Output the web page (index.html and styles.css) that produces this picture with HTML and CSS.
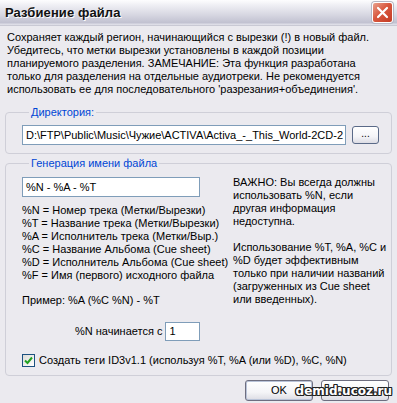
FILE: index.html
```html
<!DOCTYPE html>
<html lang="ru">
<head>
<meta charset="utf-8">
<title>Разбиение файла</title>
<link rel="stylesheet" href="styles.css">
</head>
<body>
<div class="window">
  <div class="titlebar">
    <span class="title">Разбиение файла</span>
    <span class="close">
      <svg width="13" height="13" viewBox="0 0 13 13"><path d="M2 2 L11 11 M11 2 L2 11" stroke="#fff" stroke-width="2.2" stroke-linecap="round"/></svg>
    </span>
  </div>
  <div class="content">
    <p class="desc">Сохраняет каждый регион, начинающийся с вырезки (!) в новый файл.<br>Убедитесь, что метки вырезки установлены в каждой позиции<br>планируемого разделения. ЗАМЕЧАНИЕ: Эта функция разработана<br>только для разделения на отдельные аудиотреки. Не рекомендуется<br>использовать ее для последовательного 'разрезания+объединения'.</p>

    <fieldset class="group dir">
      <legend>Директория:</legend>
      <div class="dir-row">
        <div class="field path">D:\FTP\Public\Music\Чужие\ACTIVA\Activa_-_This_World-2CD-2</div>
        <div class="btn small">...</div>
      </div>
    </fieldset>

    <fieldset class="group gen">
      <legend>Генерация имени файла</legend>
      <div class="gen-cols">
        <div class="left">
          <div class="field pattern">%N - %A - %T</div>
          <p class="codes">%N = Номер трека (Метки/Вырезки)<br>%T = Название трека (Метки/Вырезки)<br>%A = Исполнитель трека (Метки/Выр.)<br>%C = Название Альбома (Cue sheet)<br>%D = Исполнитель Альбома (Cue sheet)<br>%F = Имя (первого) исходного файла</p>
          <p class="example">Пример: %A (%C %N) - %T</p>
          <div class="start-row">
            <span>%N начинается с</span>
            <div class="field num">1</div>
          </div>
        </div>
        <div class="right">
          <p>ВАЖНО: Вы всегда должны<br>использовать %N, если<br>другая информация<br>недоступна.</p>
          <p>Использование %T, %A, %C и<br>%D будет эффективным<br>только при наличии названий<br>(загруженных из Cue sheet<br>или введенных).</p>
        </div>
      </div>
      <label class="check-row">
        <span class="checkbox">
          <svg width="9" height="9" viewBox="0 0 9 9"><path d="M1 4.5 L3.5 7 L8 1.5" fill="none" stroke="#21a121" stroke-width="2"/></svg>
        </span>
        <span>Создать теги ID3v1.1 (используя %T, %A (или %D), %C, %N)</span>
      </label>
    </fieldset>

    <div class="buttons">
      <div class="btn main default">OK</div>
      <div class="btn main">Отмена</div>
    </div>
  </div>
  <div class="watermark">demid.ucoz.ru</div>
</div>
</body>
</html>
```
FILE: styles.css
```css
* { box-sizing: border-box; }
html, body { margin: 0; padding: 0; }
body {
  width: 397px;
  height: 403px;
  overflow: hidden;
  background: #ebeaef;
  font-family: "Liberation Sans", Arial, sans-serif;
  font-size: 11px;
  line-height: 13px;
  color: #000;
}
p { white-space: nowrap; }
.window {
  position: relative;
  width: 397px;
  height: 403px;
}
.titlebar {
  height: 26px;
  display: flex;
  align-items: center;
  justify-content: space-between;
  padding: 0 4px 0 5px;
  background: linear-gradient(#fdfdfe 0%, #ececf2 25%, #d6d6e1 60%, #c2c2d1 90%, #e4e4ec 100%);
  border-bottom: 1px solid #c9c9d4;
}
.title {
  font-weight: bold;
  font-size: 13px;
  color: #111;
  text-shadow: 1px 1px 0 #fff;
  letter-spacing: 0.1px;
}
.close {
  width: 21px;
  height: 21px;
  border: 1px solid #fff;
  border-radius: 3px;
  background: linear-gradient(135deg, #e9a28f 0%, #d9583f 45%, #c33b24 100%);
  display: flex;
  align-items: center;
  justify-content: center;
  box-shadow: 0 0 0 1px #b7b7c4;
}
.content {
  padding: 5px 5px 0 5px;
}
.desc {
  margin: 0 0 10px 2px;
}
.group {
  margin: 0;
  border: 1px solid #cfcfd8;
  border-radius: 4px;
  min-width: 0;
}
.group legend {
  color: #0046d5;
  padding: 0 2px;
  margin-left: 7px;
}
.dir {
  padding: 6px 6px 8px 16px;
}
.dir-row {
  display: flex;
  align-items: center;
  gap: 6px;
}
.field {
  background: #fff;
  border: 1px solid #7f9db9;
  white-space: nowrap;
  overflow: hidden;
  padding: 0 3px;
}
.path {
  width: 324px;
  height: 20px;
  line-height: 18px;
}
.btn {
  border: 1px solid #6e6e80;
  border-radius: 3px;
  background: linear-gradient(#ffffff 0%, #f4f4f7 60%, #dcdce4 100%);
  display: flex;
  align-items: center;
  justify-content: center;
}
.small {
  width: 27px;
  height: 18px;
  font-size: 10px;
  padding-bottom: 3px;
  border-color: #5a6a88;
}
.gen {
  margin-top: 3px;
  padding: 3px 6px 8px 16px;
}
.gen-cols {
  display: flex;
  gap: 11px;
}
.left {
  width: 200px;
  flex: none;
}
.pattern {
  width: 178px;
  height: 20px;
  line-height: 18px;
  margin-top: 4px;
}
.codes {
  margin: 7px 0 0 0;
}
.example {
  margin: 12px 0 0 0;
}
.start-row {
  display: flex;
  align-items: center;
  gap: 3px;
  margin: 15px 0 0 53px;
}
.num {
  width: 35px;
  height: 19px;
  line-height: 17px;
}
.right {
  padding-top: 3px;
}
.right p {
  margin: 0 0 13px 0;
}
.check-row {
  display: flex;
  align-items: center;
  gap: 4px;
  margin-top: 13px;
}
.checkbox {
  width: 13px;
  height: 13px;
  border: 1px solid #1c5180;
  background: linear-gradient(135deg, #dcdcd7, #fff);
  display: flex;
  align-items: center;
  justify-content: center;
}
.buttons {
  display: flex;
  justify-content: flex-end;
  gap: 8px;
  margin-top: 4px;
  padding-right: 3px;
}
.main {
  width: 68px;
  height: 21px;
}
.default {
  box-shadow: inset 0 0 0 1px #b9c3d8;
}
.watermark {
  position: absolute;
  right: 5px;
  bottom: 5px;
  font-family: "DejaVu Sans", sans-serif;
  font-weight: bold;
  font-size: 12px;
  color: #fff;
  text-shadow: 1px 0 0 #222, -1px 0 0 #222, 0 1px 0 #222, 0 -1px 0 #222, 1px 1px 0 #222, -1px -1px 0 #222, 1px -1px 0 #222, -1px 1px 0 #222;
}
```
